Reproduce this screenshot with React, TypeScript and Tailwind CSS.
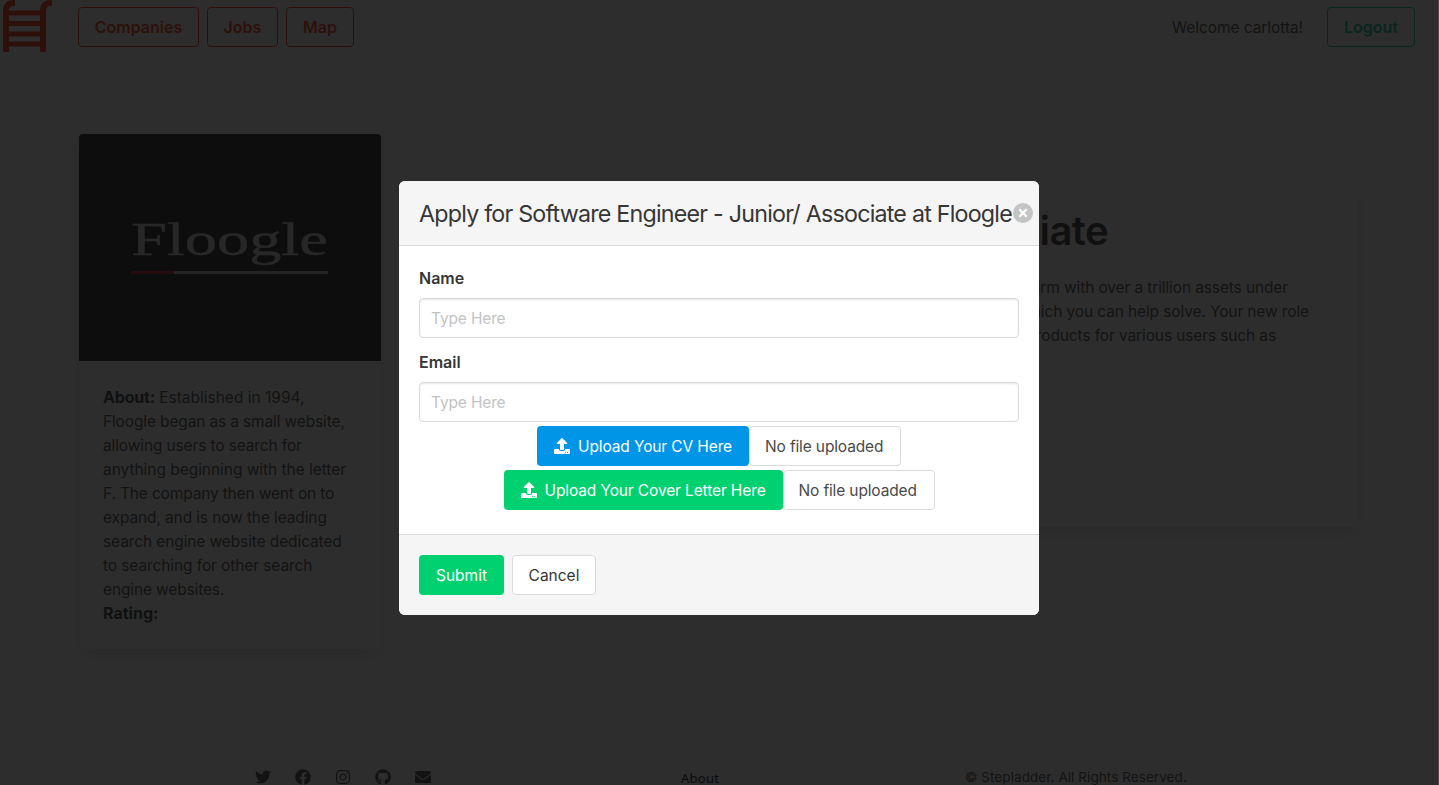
import { FaTwitter, FaFacebook, FaInstagram, FaGithub, FaEnvelope, FaUpload } from "react-icons/fa";

const navButton =
  "flex h-10 items-center justify-center rounded border text-base font-semibold whitespace-nowrap";

function Ladder() {
  return (
    <svg className="h-[54px] w-[54px]" viewBox="0 0 54 54" fill="none" stroke="#ff3709">
      <path d="M6 52V10Q6 3 15 2.8M43 52V10Q43 3 52 2.8" strokeWidth="6" />
      <path d="M8 13H41M8 23.5H41M8 34H41M8 44H41" strokeWidth="5" />
    </svg>
  );
}

function Navbar() {
  return (
    <nav className="flex h-[54px] items-center">
      <Ladder />
      <div className="ml-6 flex gap-2 text-[#ff3709]">
        <a className={`${navButton} w-[121px] border-[#ff3709]`}>Companies</a>
        <a className={`${navButton} w-[71px] border-[#ff3709]`}>Jobs</a>
        <a className={`${navButton} w-[68px] border-[#ff3709]`}>Map</a>
      </div>
      <span className="ml-auto pt-0.5 text-[#4a4a4a] tracking-[-0.07px]">Welcome carlotta!</span>
      <a className={`${navButton} mr-6 ml-6 w-[88px] border-[#00c89f] text-[#00c89f]`}>Logout</a>
    </nav>
  );
}

function CompanyCard() {
  return (
    <div className="w-[302px] rounded shadow-[0_8px_16px_-2px_rgba(10,10,10,0.1),0_0_0_1px_rgba(10,10,10,0.02)]">
      <div className="flex h-[227px] items-center justify-center rounded-t bg-[#1f1f1f]">
        <svg className="h-[60px] w-[198px] overflow-visible" viewBox="0 0 198 60">
          <text x="0" y="37" fill="#d0d0d0" stroke="#d0d0d0" strokeWidth="0.4" fontFamily="Liberation Serif, serif" fontSize="47" textLength="197" lengthAdjust="spacingAndGlyphs">
            Floogle
          </text>
          <path d="M0 54.5H197" stroke="#bdbdbd" strokeWidth="3" />
          <path d="M0 54.5H43" stroke="#c8202f" strokeWidth="3" />
        </svg>
      </div>
      <div className="p-6 whitespace-nowrap">
        <p><b className="text-base leading-6 font-bold tracking-[-0.2px] text-[#363636]">About:</b> Established in 1994,</p>
        <p className="tracking-[-0.14px]">Floogle began as a small website,</p>
        <p className="tracking-[-0.13px]">allowing users to search for</p>
        <p className="tracking-[-0.04px]">anything beginning with the letter</p>
        <p className="tracking-[-0.16px]">F. The company then went on to</p>
        <p className="tracking-[-0.12px]">expand, and is now the leading</p>
        <p className="tracking-[-0.11px]">search engine website dedicated</p>
        <p className="tracking-[-0.1px]">to searching for other search</p>
        <p className="tracking-[-0.14px]">engine websites.</p>
        <p className="-mt-px text-base font-bold text-[#363636]">Rating:</p>
      </div>
    </div>
  );
}

function JobCard() {
  return (
    <div className="mt-12 h-[345px] w-[954px] rounded pt-6 text-right whitespace-nowrap shadow-[0_8px_16px_-2px_rgba(10,10,10,0.1),0_0_0_1px_rgba(10,10,10,0.02)]">
      <h1 className="pr-[251px] text-[40px] leading-[50px] font-semibold tracking-[-0.6px] text-[#363636]">Associate</h1>
      <div className="mt-5 tracking-[-0.12px]">
        <p className="pr-[71px]">firm with over a trillion assets under</p>
        <p className="pr-[50px]">which you can help solve. Your new role</p>
        <p className="pr-[83px]">products for various users such as</p>
      </div>
    </div>
  );
}

function Footer() {
  return (
    <footer className="mt-[116px] flex h-6 items-center text-[#4a4a4a]">
      <div className="ml-[255px] flex w-[426px] gap-6 text-base">
        <FaTwitter /><FaFacebook /><FaInstagram /><FaGithub /><FaEnvelope />
      </div>
      <span className="w-[284px] pt-0.5 font-['Noto_Sans'] text-[13px] leading-5 tracking-[0.25px] text-[#0a0a0a]">About</span>
      <span className="text-[13.5px] leading-5 tracking-[0.07px]">© Stepladder. All Rights Reserved.</span>
    </footer>
  );
}

function Field({ label }: { label: string }) {
  return (
    <label className="block">
      <span className="block text-base leading-6 font-semibold text-[#363636]">{label}</span>
      <input
        className="mt-2 block h-10 w-full rounded border border-[#dbdbdb] px-[11px] tracking-[-0.15px] shadow-[inset_0_1px_2px_rgba(10,10,10,0.1)] placeholder:text-[#c3c3c3]"
        placeholder="Type Here"
      />
    </label>
  );
}

function Upload({ label, color, width }: { label: string; color: string; width: string }) {
  return (
    <div className="flex h-10 justify-center whitespace-nowrap tracking-[-0.12px]">
      <div className={`flex items-center rounded pl-[17px] text-white ${color} ${width}`}>
        <FaUpload className="mr-2 size-4 shrink-0" />
        <span className="pt-0.5">{label}</span>
      </div>
      <div className="flex w-[152px] items-center rounded border border-[#dbdbdb] pt-0.5 pl-[15px] tracking-[-0.14px]">
        No file uploaded
      </div>
    </div>
  );
}

function ApplyModal() {
  return (
    <div className="flex h-[434px] w-[640px] flex-col overflow-hidden rounded-md bg-white text-[#4a4a4a]">
      <header className="flex h-[65px] items-center border-b border-[#dbdbdb] bg-[#f5f5f5] pl-5">
        <p className="w-[594px] pt-px text-[23.25px] leading-8 whitespace-nowrap tracking-[-0.78px] text-[#363636]">
          Apply for Software Engineer - Junior/ Associate at Floogle
        </p>
        <button aria-label="close" className="mb-px size-5 shrink-0 rounded-full bg-[#c4c4c4]">
          <svg viewBox="0 0 20 20" className="size-5" stroke="white" strokeWidth="2.2">
            <path d="M6.3 6.3L13.7 13.7M13.7 6.3L6.3 13.7" />
          </svg>
        </button>
      </header>
      <section className="flex flex-1 flex-col px-5 pt-5">
        <div className="flex flex-col gap-3">
          <Field label="Name" />
          <Field label="Email" />
        </div>
        <div className="mt-1 flex flex-col gap-1">
          <Upload label="Upload Your CV Here" color="bg-[#0095e6]" width="w-[212px]" />
          <Upload label="Upload Your Cover Letter Here" color="bg-[#00d170]" width="w-[279px]" />
        </div>
      </section>
      <footer className="flex h-[81px] gap-2 border-t border-[#dbdbdb] bg-[#f5f5f5] p-5">
        <button className="h-10 w-[85px] rounded bg-[#00d170] pt-0.5 text-white">Submit</button>
        <button className="h-10 w-[84px] rounded border border-[#dbdbdb] bg-white pt-0.5 text-[#363636]">Cancel</button>
      </footer>
    </div>
  );
}

export default function App() {
  return (
    <div className="relative h-[785px] w-[1439px] overflow-hidden bg-white font-['Inter',sans-serif] text-[15.5px] leading-6 text-[#4a4a4a]">
      <Navbar />
      <main className="mt-20 ml-[79px] flex items-start gap-6">
        <CompanyCard />
        <JobCard />
      </main>
      <Footer />
      <div className="absolute inset-0 flex justify-center border-r border-[#4a4a4a] bg-[rgba(10,10,10,0.86)] pt-[181px]">
        <ApplyModal />
      </div>
    </div>
  );
}
